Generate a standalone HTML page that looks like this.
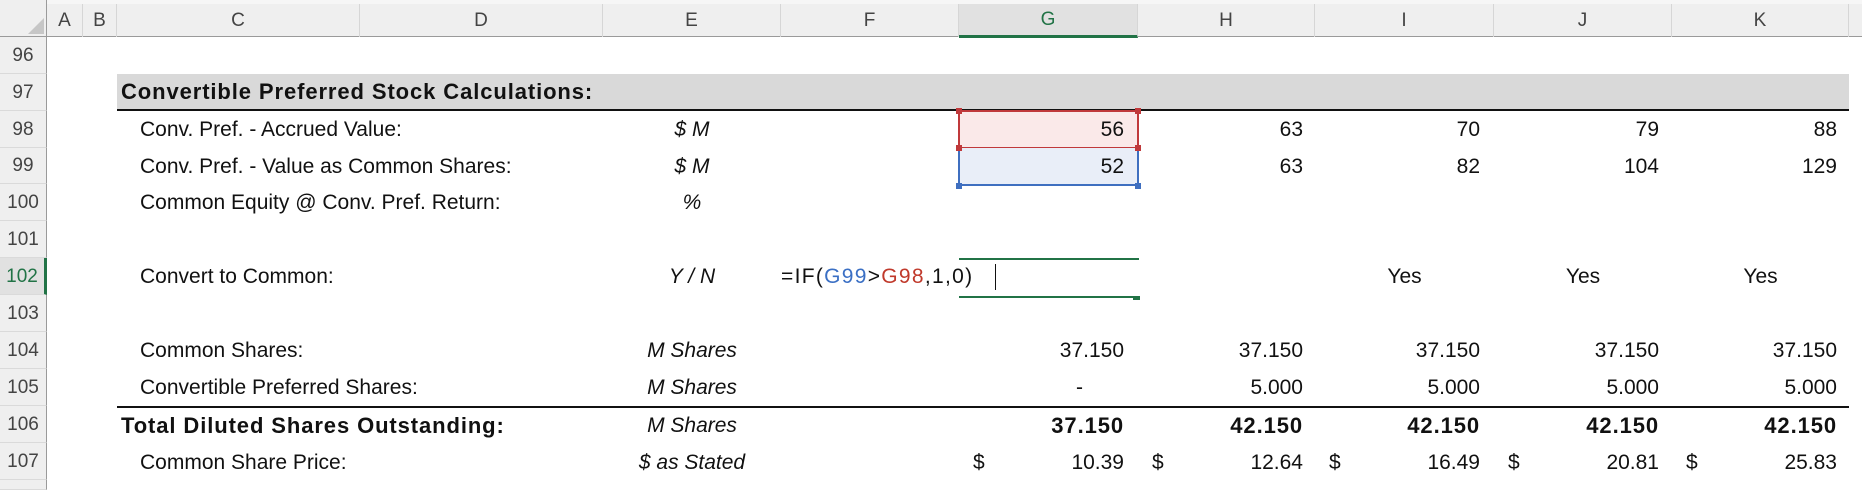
<!DOCTYPE html>
<html><head><meta charset="utf-8"><style>
*{margin:0;padding:0;box-sizing:border-box}
body{width:1862px;height:486px;background:#fff;overflow:hidden;position:relative;font-family:"Liberation Sans",Arial,sans-serif;color:#111}
.a{position:absolute;white-space:nowrap}
.hdr{position:absolute;top:0;height:37px;background:#efefef;border-bottom:1px solid #9a9a9a}
.cl{position:absolute;top:4px;height:33px;border-right:1px solid #d6d6d6;font-size:19px;color:#444;text-align:center;line-height:33px}
.rn{position:absolute;left:0;width:47px;background:#efefef;border-right:1px solid #9a9a9a;border-bottom:1px solid #dadada;font-size:19px;color:#444;text-align:center}
.t{position:absolute;font-size:21px;line-height:36px;white-space:nowrap}
.r{text-align:right}
.c{text-align:center}
.i{font-style:italic}
.b{font-weight:bold}
.bl{font-weight:bold;font-size:22px;letter-spacing:0.9px}
</style></head><body>
<div class="hdr" style="left:0;width:1862px"></div>
<div class="a" style="left:0;top:0;width:1862px;height:4px;background:#f6f6f6"></div>
<div class="a" style="left:0;top:0;width:47px;height:37px;background:#efefef;border-right:1px solid #9a9a9a;border-bottom:1px solid #9a9a9a"></div>
<svg class="a" style="left:28px;top:18px" width="16" height="16"><polygon points="16,0 16,16 0,16" fill="#c6c6c6"/></svg>
<div class="cl" style="left:47px;width:36px">A</div>
<div class="cl" style="left:83px;width:34px">B</div>
<div class="cl" style="left:117px;width:243px">C</div>
<div class="cl" style="left:360px;width:243px">D</div>
<div class="cl" style="left:603px;width:178px">E</div>
<div class="cl" style="left:781px;width:178px">F</div>
<div class="cl" style="left:959px;width:179px;background:#e1e1e1;color:#217346;border-bottom:3px solid #217346;height:34px;line-height:31px">G</div>
<div class="cl" style="left:1138px;width:177px">H</div>
<div class="cl" style="left:1315px;width:179px">I</div>
<div class="cl" style="left:1494px;width:178px">J</div>
<div class="cl" style="left:1672px;width:177px">K</div>

<div class="rn" style="top:37px;height:37px;line-height:37px">96</div>
<div class="rn" style="top:74px;height:37px;line-height:37px">97</div>
<div class="rn" style="top:111px;height:37px;line-height:37px">98</div>
<div class="rn" style="top:148px;height:36px;line-height:36px">99</div>
<div class="rn" style="top:184px;height:37px;line-height:37px">100</div>
<div class="rn" style="top:221px;height:37px;line-height:37px">101</div>
<div class="rn" style="top:258px;height:37px;line-height:37px;background:#e1e1e1;color:#217346;border-right:3px solid #217346">102</div>
<div class="rn" style="top:295px;height:37px;line-height:37px">103</div>
<div class="rn" style="top:332px;height:37px;line-height:37px">104</div>
<div class="rn" style="top:369px;height:37px;line-height:37px">105</div>
<div class="rn" style="top:406px;height:37px;line-height:37px">106</div>
<div class="rn" style="top:443px;height:37px;line-height:37px">107</div>
<div class="rn" style="top:480px;height:10px"></div>

<div class="a" style="left:117px;top:74px;width:1732px;height:37px;background:#d9d9d9;border-bottom:2px solid #111"></div>
<div class="t bl" style="left:121px;top:74px">Convertible Preferred Stock Calculations:</div>

<div class="a" style="left:958px;top:110px;width:181px;height:39px;background:#fae9e9;border:2px solid #c0393b"></div>
<div class="a" style="left:958px;top:148px;width:181px;height:38px;background:#e9eef8;border:2px solid #3f6fc0;border-top:none"></div>
<div class="a" style="left:956px;top:108px;width:6px;height:6px;background:#c0393b"></div>
<div class="a" style="left:1135px;top:108px;width:6px;height:6px;background:#c0393b"></div>
<div class="a" style="left:956px;top:145px;width:6px;height:6px;background:#c0393b"></div>
<div class="a" style="left:1135px;top:145px;width:6px;height:6px;background:#c0393b"></div>
<div class="a" style="left:956px;top:183px;width:6px;height:6px;background:#3f6fc0"></div>
<div class="a" style="left:1135px;top:183px;width:6px;height:6px;background:#3f6fc0"></div>

<div class="t" style="left:140px;top:112px">Conv. Pref. - Accrued Value:</div>
<div class="t i c" style="left:603px;width:178px;top:112px">$ M</div>
<div class="t r" style="left:959px;width:165px;top:112px">56</div>
<div class="t r" style="left:1138px;width:165px;top:112px">63</div>
<div class="t r" style="left:1315px;width:165px;top:112px">70</div>
<div class="t r" style="left:1494px;width:165px;top:112px">79</div>
<div class="t r" style="left:1672px;width:165px;top:112px">88</div>

<div class="t" style="left:140px;top:149px">Conv. Pref. - Value as Common Shares:</div>
<div class="t i c" style="left:603px;width:178px;top:149px">$ M</div>
<div class="t r" style="left:959px;width:165px;top:149px">52</div>
<div class="t r" style="left:1138px;width:165px;top:149px">63</div>
<div class="t r" style="left:1315px;width:165px;top:149px">82</div>
<div class="t r" style="left:1494px;width:165px;top:149px">104</div>
<div class="t r" style="left:1672px;width:165px;top:149px">129</div>

<div class="t" style="left:140px;top:185px">Common Equity @ Conv. Pref. Return:</div>
<div class="t i c" style="left:603px;width:178px;top:185px">%</div>

<div class="a" style="left:959px;top:258px;width:180px;height:2px;background:#217346"></div>
<div class="a" style="left:959px;top:296px;width:176px;height:2px;background:#217346"></div>
<div class="a" style="left:1133px;top:296px;width:7px;height:4px;background:#217346"></div>
<div class="t" style="left:140px;top:259px">Convert to Common:</div>
<div class="t i c" style="left:603px;width:178px;top:259px">Y / N</div>
<div class="t" style="left:781px;top:259px;letter-spacing:1.3px">=IF(<span style="color:#3a6fc4">G99</span>&gt;<span style="color:#c0392b">G98</span>,1,0)</div>
<div class="a" style="left:995px;top:264px;width:1px;height:26px;background:#111"></div>
<div class="t c" style="left:1315px;width:179px;top:259px">Yes</div>
<div class="t c" style="left:1494px;width:178px;top:259px">Yes</div>
<div class="t c" style="left:1672px;width:177px;top:259px">Yes</div>

<div class="t" style="left:140px;top:333px">Common Shares:</div>
<div class="t i c" style="left:603px;width:178px;top:333px">M Shares</div>
<div class="t r" style="left:959px;width:165px;top:333px">37.150</div>
<div class="t r" style="left:1138px;width:165px;top:333px">37.150</div>
<div class="t r" style="left:1315px;width:165px;top:333px">37.150</div>
<div class="t r" style="left:1494px;width:165px;top:333px">37.150</div>
<div class="t r" style="left:1672px;width:165px;top:333px">37.150</div>

<div class="t" style="left:140px;top:370px">Convertible Preferred Shares:</div>
<div class="t i c" style="left:603px;width:178px;top:370px">M Shares</div>
<div class="t r" style="left:959px;width:124px;top:370px">-</div>
<div class="t r" style="left:1138px;width:165px;top:370px">5.000</div>
<div class="t r" style="left:1315px;width:165px;top:370px">5.000</div>
<div class="t r" style="left:1494px;width:165px;top:370px">5.000</div>
<div class="t r" style="left:1672px;width:165px;top:370px">5.000</div>
<div class="a" style="left:117px;top:406px;width:1732px;height:2px;background:#111"></div>

<div class="t bl" style="left:121px;top:408px">Total Diluted Shares Outstanding:</div>
<div class="t i c" style="left:603px;width:178px;top:408px">M Shares</div>
<div class="t r bl" style="left:959px;width:165px;top:408px">37.150</div>
<div class="t r bl" style="left:1138px;width:165px;top:408px">42.150</div>
<div class="t r bl" style="left:1315px;width:165px;top:408px">42.150</div>
<div class="t r bl" style="left:1494px;width:165px;top:408px">42.150</div>
<div class="t r bl" style="left:1672px;width:165px;top:408px">42.150</div>

<div class="t" style="left:140px;top:445px">Common Share Price:</div>
<div class="t i c" style="left:603px;width:178px;top:445px">$ as Stated</div>
<div class="t" style="left:973px;top:445px">$</div>
<div class="t r" style="left:959px;width:165px;top:445px">10.39</div>
<div class="t" style="left:1152px;top:445px">$</div>
<div class="t r" style="left:1138px;width:165px;top:445px">12.64</div>
<div class="t" style="left:1329px;top:445px">$</div>
<div class="t r" style="left:1315px;width:165px;top:445px">16.49</div>
<div class="t" style="left:1508px;top:445px">$</div>
<div class="t r" style="left:1494px;width:165px;top:445px">20.81</div>
<div class="t" style="left:1686px;top:445px">$</div>
<div class="t r" style="left:1672px;width:165px;top:445px">25.83</div>
</body></html>
